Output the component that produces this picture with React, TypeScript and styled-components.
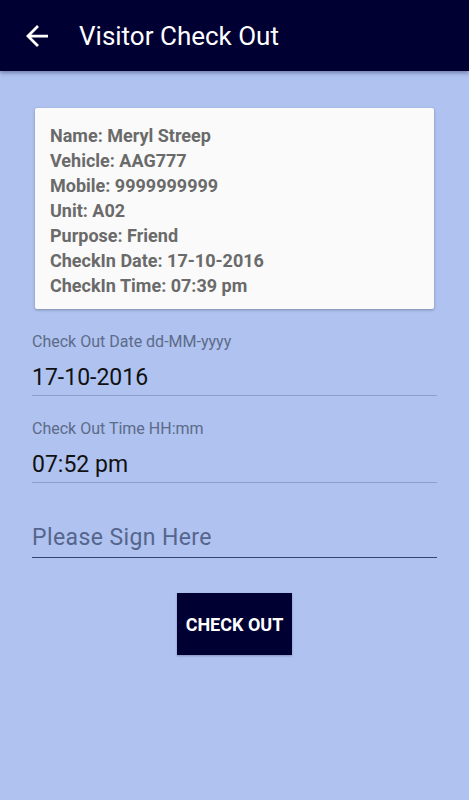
import React from "react";
import styled, { createGlobalStyle } from "styled-components";

const GlobalStyle = createGlobalStyle`
  html, body { margin: 0; padding: 0; }
  body { font-family: Roboto, "Noto Sans", Arial, sans-serif; background: #afc2f0; }
  * { box-sizing: border-box; }
`;

const Screen = styled.div`
  width: 469px;
  min-height: 800px;
  background: #afc2f0;
  display: flex;
  flex-direction: column;
`;

const AppBar = styled.header`
  height: 71px;
  background: #000033;
  display: flex;
  align-items: center;
  padding-left: 26px;
  gap: 31px;
  box-shadow: 0 2px 4px rgba(0, 0, 40, 0.35);
  position: relative;
  z-index: 1;
`;

const BackButton = styled.div`
  width: 22px;
  height: 22px;
  display: flex;
  color: #ffffff;
`;

const Title = styled.h1`
  margin: 0;
  font-size: 26px;
  line-height: 30px;
  font-weight: 400;
  color: #ffffff;
`;

const Content = styled.main`
  display: flex;
  flex-direction: column;
  padding: 37px 32px 0 32px;
`;

const Card = styled.section`
  margin: 0 3px;
  background: #fafafa;
  border-radius: 2px;
  box-shadow: 0 1px 3px rgba(0, 0, 0, 0.3);
  padding: 15px 15px 11px 15px;
  display: flex;
  flex-direction: column;
`;

const InfoLine = styled.div`
  font-size: 18px;
  line-height: 25px;
  font-weight: 700;
  color: #6a6a6a;
`;

const Field = styled.div<{ $top: number }>`
  display: flex;
  flex-direction: column;
  margin-top: ${(p) => p.$top}px;
`;

const Label = styled.div`
  font-size: 16px;
  line-height: 18px;
  color: #5d6b88;
  margin-bottom: 13px;
`;

const Value = styled.div<{ $placeholder?: boolean; $strong?: boolean }>`
  font-size: 23px;
  line-height: 28px;
  letter-spacing: ${(p) => (p.$placeholder ? 0.4 : 0)}px;
  color: ${(p) => (p.$placeholder ? "#56658c" : "#111111")};
  padding-bottom: ${(p) => (p.$strong ? 5 : 3)}px;
  border-bottom: 1px solid ${(p) => (p.$strong ? "#34437a" : "#8d9fcf")};
`;

const ButtonRow = styled.div`
  display: flex;
  justify-content: center;
  margin-top: 35px;
`;

const CheckOutButton = styled.button`
  width: 115px;
  height: 62px;
  border: none;
  border-radius: 0;
  background: #000033;
  color: #ffffff;
  font-family: Roboto, "Noto Sans", Arial, sans-serif;
  font-size: 18px;
  font-weight: 700;
  padding: 0;
  box-shadow: 0 1px 2px rgba(0, 0, 0, 0.25);
`;

const info = [
  "Name: Meryl Streep",
  "Vehicle: AAG777",
  "Mobile: 9999999999",
  "Unit: A02",
  "Purpose: Friend",
  "CheckIn Date: 17-10-2016",
  "CheckIn Time: 07:39 pm",
];

export default function App() {
  return (
    <>
      <GlobalStyle />
      <Screen>
        <AppBar>
          <BackButton>
            <svg width="22" height="22" viewBox="4 4 16 16" fill="currentColor">
              <path d="M20 11H7.83l5.59-5.59L12 4l-8 8 8 8 1.41-1.41L7.83 13H20v-2z" />
            </svg>
          </BackButton>
          <Title>Visitor Check Out</Title>
        </AppBar>
        <Content>
          <Card>
            {info.map((l) => (
              <InfoLine key={l}>{l}</InfoLine>
            ))}
          </Card>
          <Field $top={24}>
            <Label>Check Out Date dd-MM-yyyy</Label>
            <Value>17-10-2016</Value>
          </Field>
          <Field $top={24}>
            <Label>Check Out Time HH:mm</Label>
            <Value>07:52 pm</Value>
          </Field>
          <Field $top={41}>
            <Value $placeholder $strong>Please Sign Here</Value>
          </Field>
          <ButtonRow>
            <CheckOutButton>CHECK OUT</CheckOutButton>
          </ButtonRow>
        </Content>
      </Screen>
    </>
  );
}
